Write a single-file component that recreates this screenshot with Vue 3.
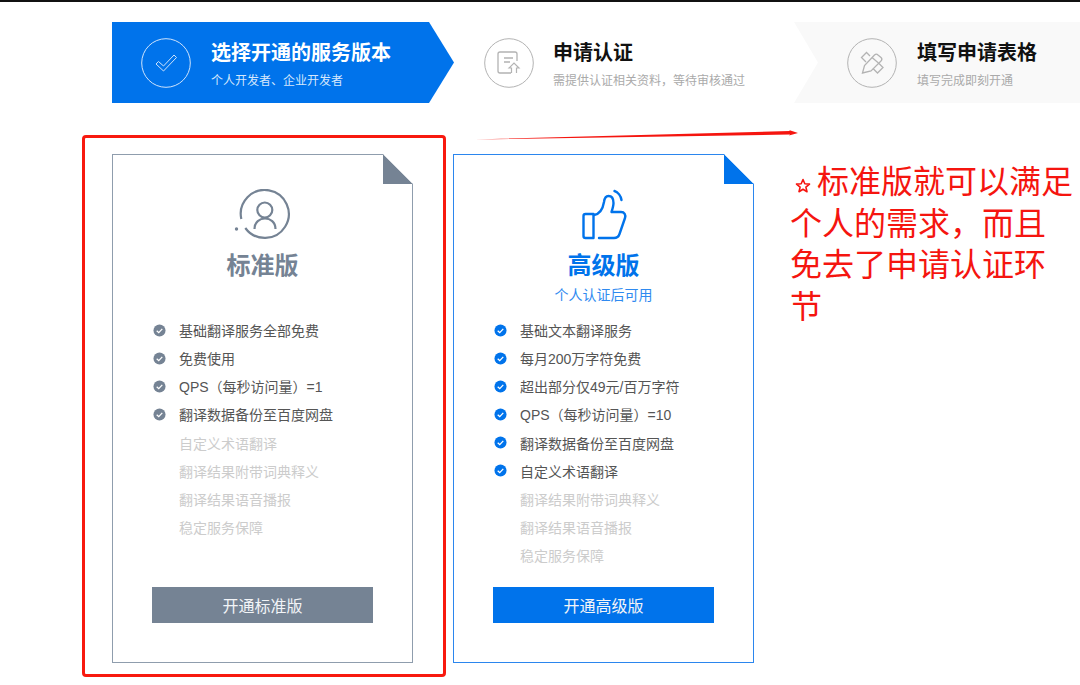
<template>
  <div class="page">
    <!-- Pasos -->
    <div class="steps">
      <div class="step step-one">
        <div class="circle">
          <svg viewBox="0 0 50 50" width="50" height="50" fill="none" stroke="currentColor">
            <circle cx="25" cy="25" r="24.3" stroke-width="1" />
            <path d="M15 26l2.500-2.500 5 4.500 10.500-11 2.500 2.500-13 13.500z" stroke-width="1" />
          </svg>
        </div>
        <div class="step-text">
          <h3>选择开通的服务版本</h3>
          <p>个人开发者、企业开发者</p>
        </div>
      </div>
      <div class="step step-two">
        <div class="circle">
          <svg viewBox="0 0 50 50" width="50" height="50" fill="none" stroke="currentColor">
            <circle cx="25" cy="25" r="24.3" stroke-width="1" />
            <path d="M27 35H16a2 2 0 0 1-2-2V16a2 2 0 0 1 2-2h15a2 2 0 0 1 2 2v7" stroke-width="1.300" />
            <path d="M20 20h9M20 24h6" stroke-width="1.300" />
            <path d="M27.500 35v-5H25l5-5 5 5h-2.500v5" stroke-width="1.200" />
          </svg>
        </div>
        <div class="step-text">
          <h3>申请认证</h3>
          <p>需提供认证相关资料，等待审核通过</p>
        </div>
      </div>
      <div class="step step-three">
        <div class="circle">
          <svg viewBox="0 0 50 50" width="50" height="50" fill="none" stroke="currentColor">
            <circle cx="25" cy="25" r="24.3" stroke-width="1" />
            <path d="M15.500 35l2-7.500 10-10.500c1-1 2.500-1 3.500 0l3 2.500c1 1 1 2.500 0 3.500L24 33z" stroke-width="1.300" />
            <path d="M25 19.500l6.500 5.500" stroke-width="1.300" />
            <path d="M19 24l-4.500-4.500 5-5 3.500 3.500M26 30.500l4.500 4.500 5.500-5.500-4-4" stroke-width="1.300" />
          </svg>
        </div>
        <div class="step-text">
          <h3>填写申请表格</h3>
          <p>填写完成即刻开通</p>
        </div>
      </div>
    </div>

    <!-- Planes -->
    <div class="plans">
      <div class="plan" v-for="plan in plans" :key="plan.id" :class="plan.id">
        <svg class="fold" viewBox="0 0 30 30" width="30" height="30">
          <path d="M0 0L30 30H0z" class="fold-fill" />
          <path d="M0 0L30 30V0z" fill="#fff" />
        </svg>

        <div class="plan-head">
          <svg v-if="plan.id === 'basic'" class="plan-icon" viewBox="0 0 60 54" fill="none" stroke="currentColor" stroke-width="2.200">
            <path d="M8.300 30A24 24 0 1 1 12.300 39" />
            <circle cx="31.800" cy="21" r="7.500" />
            <path d="M21.500 40c0-14 21-14 21 0" />
            <circle cx="3.500" cy="40" r="1.700" fill="currentColor" stroke="none" />
          </svg>
          <svg v-else class="plan-icon" viewBox="0 0 60 54" fill="none" stroke="currentColor" stroke-width="2.400" stroke-linecap="round" stroke-linejoin="round">
            <path d="M19.500 25H11.500a2 2 0 0 0-2 2v20a2 2 0 0 0 2 2h8z" />
            <path d="M20 26C26 25 29 19 30 13C30.500 9 32 7 34.500 7C38 7 39.500 10 39.500 14C39.500 17 38.500 20 37.500 23H47C50.500 23 52 26 51 29L45.500 45C44.500 48 43 49 40 49H25" />
            <path d="M40.500 2c3.500 1 6.500 5 7 9" />
          </svg>
          <h2>{{ plan.name }}</h2>
          <p v-if="plan.note" class="note">{{ plan.note }}</p>
        </div>

        <ul>
          <li v-for="item in plan.items" :key="item">
            <svg viewBox="0 0 14 14" width="14" height="14" class="tick">
              <circle cx="7" cy="7" r="6.500" class="fold-fill" />
              <path d="M4 7.200l2.200 2.100L10 5.300" fill="none" stroke="#fff" stroke-width="1.400" />
            </svg>
            {{ item }}
          </li>
          <li v-for="item in plan.off" :key="item" class="off">{{ item }}</li>
        </ul>

        <button class="btn">{{ plan.button }}</button>
      </div>
    </div>

    <!-- Anotaciones en rojo sobre la captura -->
    <div class="red-frame"></div>
    <svg class="red-arrow" viewBox="0 0 330 14" width="330" height="14">
      <path d="M0 12.500L315 4 314 3 323 6 314 8.500 315 7.500z" fill="#f5150f" />
    </svg>
    <div class="red-note">
      <svg class="star" viewBox="0 0 16 16" width="16" height="16">
        <path d="M8 1.500l1.800 4.200 4.700.4-3.600 3 1.100 4.600L8 11.200l-4 2.500 1.100-4.600-3.600-3 4.700-.4z" fill="#fff" stroke="#f5150f" stroke-width="1.600" stroke-linejoin="round" />
      </svg>标准版就可以满足个人的需求，而且免去了申请认证环节
    </div>
  </div>
</template>

<script setup>
const plans = [
  {
    id: "basic",
    name: "标准版",
    note: "",
    button: "开通标准版",
    items: ["基础翻译服务全部免费", "免费使用", "QPS（每秒访问量）=1", "翻译数据备份至百度网盘"],
    off: ["自定义术语翻译", "翻译结果附带词典释义", "翻译结果语音播报", "稳定服务保障"],
  },
  {
    id: "pro",
    name: "高级版",
    note: "个人认证后可用",
    button: "开通高级版",
    items: [
      "基础文本翻译服务",
      "每月200万字符免费",
      "超出部分仅49元/百万字符",
      "QPS（每秒访问量）=10",
      "翻译数据备份至百度网盘",
      "自定义术语翻译",
    ],
    off: ["翻译结果附带词典释义", "翻译结果语音播报", "稳定服务保障"],
  },
];
</script>

<style>
html,
body {
  margin: 0;
  background: #fff;
  overflow: hidden;
}
</style>

<style scoped>
.page {
  position: relative;
  height: 685px;
  box-sizing: border-box;
  border-top: 2px solid #111;
  padding: 20px 0 0 112px;
  font-family: "Liberation Sans", "Noto Sans CJK SC", sans-serif;
  overflow: hidden;
}

/* Pasos */
.steps {
  display: flex;
  height: 81px;
}

.step {
  display: flex;
  align-items: center;
  gap: 20px;
  box-sizing: border-box;
  color: #b3b3b3;
}

.step-text {
  padding-top: 3px;
}

.step h3 {
  margin: 0;
  font-size: 20px;
  line-height: 28px;
  color: #111;
}

.step p {
  margin: 5px 0 0;
  font-size: 12px;
  line-height: 18px;
  color: #aaa;
}

.circle {
  width: 50px;
  height: 50px;
  flex: none;
}

.circle svg {
  display: block;
}

.step-one {
  width: 342px;
  padding-left: 29px;
  background: #0073eb;
  color: #cfe3fb;
  clip-path: polygon(0 0, 317px 0, 100% 50%, 317px 100%, 0 100%);
}

.step-one h3 {
  color: #fff;
}

.step-one p {
  color: #d5e7fc;
}

.step-two {
  width: 340px;
  padding-left: 30px;
  gap: 19px;
}

.step-three {
  width: 286px;
  padding-left: 53px;
  background: #f9f9f9;
  clip-path: polygon(0 0, 100% 0, 100% 100%, 0 100%, 24px 50%);
}

/* Planes */
.plans {
  display: flex;
  gap: 40px;
  margin-top: 51px;
}

.plan {
  position: relative;
  display: flex;
  flex-direction: column;
  box-sizing: border-box;
  width: 301px;
  height: 509px;
  padding-bottom: 39px;
  border: 1px solid #8f9dad;
  --tone: #758394;
  color: var(--tone);
}

.plan.pro {
  border-color: #2b86ee;
  --tone: #0073eb;
}

.fold {
  position: absolute;
  top: -1px;
  right: -1px;
}

.fold-fill {
  fill: var(--tone);
}

.plan-head {
  height: 161px;
  padding-top: 34px;
  box-sizing: border-box;
  text-align: center;
}

.plan-icon {
  display: block;
  width: 60px;
  height: 54px;
  margin: 0 auto;
}

.plan-head h2 {
  margin: 6px 0 0;
  font-size: 24px;
  line-height: 34px;
}

.note {
  margin: 2px 0 0;
  font-size: 14px;
  line-height: 20px;
  color: #2f8af0;
}

ul {
  list-style: none;
  margin: 0;
  padding: 0 0 0 40px;
}

li {
  display: flex;
  align-items: center;
  gap: 13px;
  height: 28.140px;
  font-size: 14px;
  color: #555;
}

li.off {
  padding-left: 26px;
  color: #ccc;
}

.tick {
  flex: none;
  width: 13px;
  height: 13px;
}

.btn {
  width: 221px;
  height: 36px;
  margin: auto auto 0;
  border: none;
  background: var(--tone);
  color: #f2f4f7;
  font: 16px "Liberation Sans", "Noto Sans CJK SC", sans-serif;
}

/* Anotaciones */
.red-frame {
  position: absolute;
  left: 82px;
  top: 133px;
  width: 364px;
  height: 542px;
  box-sizing: border-box;
  border: 3px solid #f8190f;
  border-radius: 4px;
}

.red-arrow {
  position: absolute;
  left: 475px;
  top: 125px;
}

.red-note {
  position: absolute;
  left: 790px;
  top: 160px;
  width: 285px;
  font-size: 32px;
  line-height: 41.500px;
  color: #f5150f;
}

.star {
  width: 16px;
  height: 16px;
  margin: 0 6px 0 5px;
  vertical-align: -1px;
}
</style>
